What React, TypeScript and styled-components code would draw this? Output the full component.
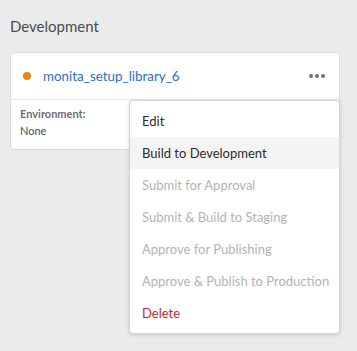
import React from 'react';
import styled, { createGlobalStyle } from 'styled-components';

const GlobalStyle = createGlobalStyle`
  html, body {
    margin: 0;
    padding: 0;
    background: #ebebeb;
  }
  body {
    font-family: Lato, "Open Sans", sans-serif;
    -webkit-font-smoothing: antialiased;
  }
`;

const Page = styled.div`
  width: 357px;
  height: 351px;
  box-sizing: border-box;
  padding: 18px 17px 0 10px;
  background: #ebebeb;
  overflow: hidden;
`;

const SectionTitle = styled.h2`
  margin: 0 0 17px;
  font-size: 15px;
  font-weight: 400;
  line-height: 17px;
  color: #4b4b4b;
`;

const Card = styled.div`
  position: relative;
  background: #fff;
  border: 1px solid #dcdcdc;
  border-radius: 4px;
  width: 330px;
  box-sizing: border-box;
`;

const CardHeader = styled.div`
  display: flex;
  align-items: center;
  height: 46px;
  padding: 0 14px 0 12px;
  border-bottom: 1px solid #e6e6e6;
`;

const StatusDot = styled.span<{ color: string }>`
  width: 8px;
  height: 8px;
  border-radius: 50%;
  background: ${p => p.color};
  margin-right: 12px;
  flex-shrink: 0;
`;

const LibraryName = styled.a`
  flex: 1;
  font-size: 13.4px;
  color: #2c6fc7;
  text-decoration: none;
`;

const MoreButton = styled.button`
  border: none;
  background: none;
  padding: 0;
  display: flex;
  gap: 2px;
  cursor: pointer;
`;

const MoreDot = styled.span`
  width: 4px;
  height: 4px;
  border-radius: 50%;
  background: #707070;
`;

const CardBody = styled.div`
  padding: 6px 9px 10px;
`;

const FieldLabel = styled.div`
  font-size: 11px;
  font-weight: 700;
  color: #6e6e6e;
  line-height: 16px;
`;

const FieldValue = styled.div`
  font-size: 11px;
  color: #4b4b4b;
  line-height: 17px;
`;

const Menu = styled.ul`
  position: absolute;
  top: 47px;
  left: 118px;
  width: 211px;
  margin: 0;
  padding: 4px 0;
  list-style: none;
  background: #fff;
  border: 1px solid #d3d3d3;
  border-radius: 4px;
  box-shadow: 0 1px 4px rgba(0, 0, 0, 0.15);
  box-sizing: border-box;
  z-index: 10;
`;

type Tone = 'normal' | 'disabled' | 'danger';

const MenuItem = styled.li<{ tone: Tone; active?: boolean }>`
  height: 32px;
  display: flex;
  align-items: center;
  padding: 0 12px;
  font-size: 13px;
  background: ${p => (p.active ? '#f4f4f4' : 'transparent')};
  color: ${p =>
    p.tone === 'disabled' ? '#b3b3b3' : p.tone === 'danger' ? '#c9252d' : '#2c2c2c'};
  cursor: ${p => (p.tone === 'disabled' ? 'default' : 'pointer')};
  white-space: nowrap;
`;

const items: { label: string; tone: Tone; active?: boolean }[] = [
  { label: 'Edit', tone: 'normal' },
  { label: 'Build to Development', tone: 'normal', active: true },
  { label: 'Submit for Approval', tone: 'disabled' },
  { label: 'Submit & Build to Staging', tone: 'disabled' },
  { label: 'Approve for Publishing', tone: 'disabled' },
  { label: 'Approve & Publish to Production', tone: 'disabled' },
  { label: 'Delete', tone: 'danger' },
];

export default function App() {
  return (
    <Page>
      <GlobalStyle />
      <SectionTitle>Development</SectionTitle>
      <Card>
        <CardHeader>
          <StatusDot color="#e68619" />
          <LibraryName href="#">monita_setup_library_6</LibraryName>
          <MoreButton aria-label="More actions">
            <MoreDot />
            <MoreDot />
            <MoreDot />
          </MoreButton>
        </CardHeader>
        <CardBody>
          <FieldLabel>Environment:</FieldLabel>
          <FieldValue>None</FieldValue>
        </CardBody>
        <Menu>
          {items.map(item => (
            <MenuItem key={item.label} tone={item.tone} active={item.active}>
              {item.label}
            </MenuItem>
          ))}
        </Menu>
      </Card>
    </Page>
  );
}
